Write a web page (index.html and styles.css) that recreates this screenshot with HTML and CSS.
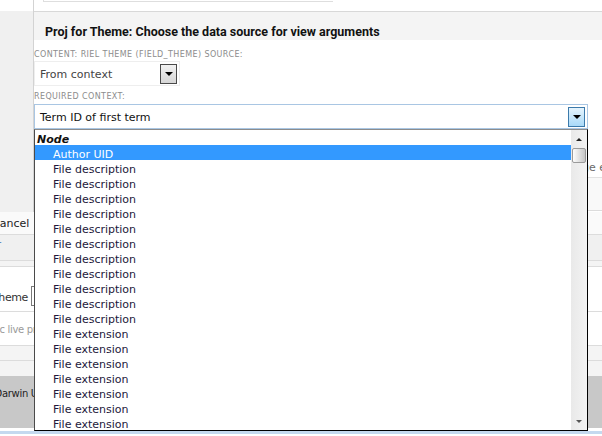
FILE: index.html
```html
<!DOCTYPE html>
<html lang="en">
<head>
    <meta charset="UTF-8">
    <meta name="viewport" content="width=device-width, initial-scale=1.0">
    <title>Views UI - Argument source</title>
    <link rel="stylesheet" href="styles.css">
</head>
<body>
    <!-- page behind the dialog -->
    <div class="page">
        <div class="bg-blank"></div>
        <div class="bg-side"></div>
        <div class="bg-actions"><span class="bg-button">Cancel</span></div>
        <div class="bg-links"><a class="bg-link">r</a></div>
        <div class="bg-gap"></div>
        <div class="bg-field">
            <span class="bg-label">Theme</span>
            <span class="bg-input"></span>
        </div>
        <div class="bg-note">Automatic live preview</div>
        <div class="bg-band"></div>
        <div class="bg-band bg-band-last"></div>
        <div class="bg-footer">Charles Darwin University</div>
        <div class="bg-end"></div>
    </div>

    <div class="dialog">
        <div class="dialog-top"><div class="dialog-top-box"></div></div>
        <h2 class="dialog-title">Proj for Theme: Choose the data source for view arguments</h2>
        <div class="dialog-body">
            <div class="field-label">Content: Riel Theme (field_theme) source:</div>
            <div class="select select-short">
                <span class="select-value">From context</span>
                <span class="select-button"><span class="arrow-down"></span></span>
            </div>
            <div class="field-label">Required context:</div>
            <div class="select select-open">
                <span class="select-value">Term ID of first term</span>
                <span class="select-button"><span class="arrow-down"></span></span>

                <div class="listbox">
                    <div class="listbox-items">
                        <div class="optgroup">Node</div>
                        <div class="option selected">Author UID</div>
                        <div class="option">File description</div>
                        <div class="option">File description</div>
                        <div class="option">File description</div>
                        <div class="option">File description</div>
                        <div class="option">File description</div>
                        <div class="option">File description</div>
                        <div class="option">File description</div>
                        <div class="option">File description</div>
                        <div class="option">File description</div>
                        <div class="option">File description</div>
                        <div class="option">File description</div>
                        <div class="option">File extension</div>
                        <div class="option">File extension</div>
                        <div class="option">File extension</div>
                        <div class="option">File extension</div>
                        <div class="option">File extension</div>
                        <div class="option">File extension</div>
                        <div class="option">File extension</div>
                        <div class="option">File extension</div>
                        <div class="option">File MIME type</div>
                    </div>
                    <div class="scrollbar">
                        <span class="scroll-up"></span>
                        <span class="scroll-thumb"></span>
                        <span class="scroll-down"></span>
                    </div>
                </div>
            </div>
            <p class="dialog-note">The selected context supplies the argument value whenever this display is used as the page e</p>
        </div>
        <div class="dialog-footer"></div>
    </div>
</body>
</html>
```

FILE: styles.css
```css
body {
    margin: 0;
    width: 602px;
    height: 436px;
    overflow: hidden;
    position: relative;
    font-family: "DejaVu Sans", sans-serif;
    font-size: 11px;
    color: #222;
    background: #fff;
}

/* page behind */
.page { display: flex; flex-direction: column; font-size: 10px; }
.bg-blank { height: 11px; background: #fff; }
.bg-side { height: 201px; background: #f0f0f0; }
.bg-actions {
    height: 22px;
    background: #fafafa;
    border-bottom: 1px solid #dcdcdc;
    display: flex;
    align-items: center;
    font-size: 11px;
}
.bg-button { margin-left: -12px; padding: 0 4px; }
.bg-links {
    height: 25px;
    background: #f0f0f0;
    border-bottom: 1px solid #dcdcdc;
}
.bg-link { color: #3b73b9; display: inline-block; margin: 4px 0 0 -3px; }
.bg-gap { height: 5px; background: #f4f4f4; border-bottom: 1px solid #dcdcdc; }
.bg-field {
    height: 45px;
    border-bottom: 1px solid #dcdcdc;
    display: flex;
    align-items: flex-end;
    padding-bottom: 5px;
    box-sizing: border-box;
}
.bg-label {
    margin: 0 0 2px -8px;
    letter-spacing: -0.4px;
    color: #333;
    font-size: 11px;
}
.bg-input {
    width: 40px;
    height: 18px;
    margin-left: 3px;
    border: 1px solid #7a7a7a;
    background: #fff;
}
.bg-note {
    height: 34px;
    border-bottom: 1px solid #dcdcdc;
    color: #9a9a9a;
    margin-left: -44px;
    letter-spacing: -0.3px;
    padding-top: 12px;
    box-sizing: border-box;
}
.bg-band { height: 14px; background: #f4f4f4; border-bottom: 1px solid #dcdcdc; }
.bg-band-last { height: 15px; border-bottom: 0; }
.bg-footer {
    height: 52px;
    background: #c8c8c8;
    margin-left: -44px;
    letter-spacing: -0.3px;
    padding-top: 12px;
    box-sizing: border-box;
}
.bg-end { height: 3px; background: #fff; border-bottom: 3px solid #c4d9ef; }

/* dialog */
.dialog {
    position: absolute;
    left: 33px;
    top: 0;
    right: 0;
    height: 212px;
    background: #fff;
    border-left: 1px solid #d3d3d3;
}
.dialog-top { height: 11px; }
.dialog-top-box {
    width: 289px;
    height: 1px;
    margin-left: 9px;
    border-left: 1px solid #dedede;
    border-bottom: 1px solid #dedede;
}
.dialog-title {
    margin: 0;
    height: 29px;
    padding: 11px 0 0 11px;
    box-sizing: border-box;
    border-top: 1px solid #d8d8d8;
    background: #f4f4f4;
    font: bold 12.5px/18px Roboto, sans-serif;
    color: #111;
}
.dialog-body { padding-top: 7px; }
.field-label {
    font-size: 8px;
    line-height: 11px;
    padding-top: 2px;
    letter-spacing: 0.4px;
    text-transform: uppercase;
    color: #8c8c8c;
}

.select {
    position: relative;
    display: flex;
    align-items: center;
    height: 25px;
    box-sizing: border-box;
    background: #fff;
}
.select-value { flex: 1; padding: 2px 0 0 5px; }
.select-button {
    width: 17px;
    height: 20px;
    margin-right: 2px;
    box-sizing: border-box;
    display: flex;
    align-items: center;
    justify-content: center;
}
.arrow-down {
    width: 0;
    height: 0;
    border-left: 4px solid transparent;
    border-right: 4px solid transparent;
    border-top: 4px solid #000;
    margin-top: 1px;
}
.select-short {
    width: 146px;
    margin: 1px 0 3px;
    border: 1px solid #eeeeee;
    color: #444;
}
.select-short .select-button {
    border: 1px solid #4a4a4a;
    background: linear-gradient(#f2f2f2, #d6d6d6);
}
.select-open {
    width: 554px;
    margin-top: 2px;
    border: 1px solid #a9c6e3;
    color: #111;
}
.select-open .select-button {
    border: 1px solid #3c7aab;
    background: linear-gradient(#e6f4fd, #a9d9f8);
}

.dialog-note {
    margin: 32px -4px 0 0;
    line-height: 14px;
    color: #6a6a6a;
    white-space: nowrap;
    text-align: right;
}
.dialog-footer {
    position: absolute;
    left: 0;
    right: 0;
    top: 177px;
    height: 32px;
    background: #f9f9f9;
    border-top: 1px solid #e2e2e2;
    border-bottom: 1px solid #dcdcdc;
}

/* open dropdown */
.listbox {
    position: absolute;
    left: -1px;
    top: calc(100% + 1px);
    width: 554px;
    height: 302px;
    box-sizing: border-box;
    display: flex;
    background: #fff;
    border: 1px solid #000;
    border-top-color: #8c8c8c;
    border-left-color: #4a4a4a;
    z-index: 2;
}
.listbox-items { flex: 1; overflow: hidden; }
.optgroup {
    height: 15px;
    line-height: 19px;
    padding-left: 2px;
    font-weight: bold;
    font-style: italic;
}
.option {
    height: 15px;
    line-height: 19px;
    padding-left: 18px;
    color: #22183a;
}
.option.selected { background: #3399ff; color: #fff; }

.scrollbar {
    position: relative;
    width: 16px;
    background: linear-gradient(to right, #e9e9e9, #f3f3f3);
}
.scroll-up, .scroll-down {
    position: absolute;
    left: 5px;
    width: 0;
    height: 0;
    border-left: 3px solid transparent;
    border-right: 3px solid transparent;
}
.scroll-up { top: 8px; border-bottom: 3px solid #222; }
.scroll-down { bottom: 7px; border-top: 3px solid #555; }
.scroll-thumb {
    position: absolute;
    left: 1px;
    top: 18px;
    width: 14px;
    height: 15px;
    box-sizing: border-box;
    border: 1px solid #9a9a9a;
    border-radius: 2px;
    background: linear-gradient(to right, #fdfdfd, #c6c6c6);
}
```
